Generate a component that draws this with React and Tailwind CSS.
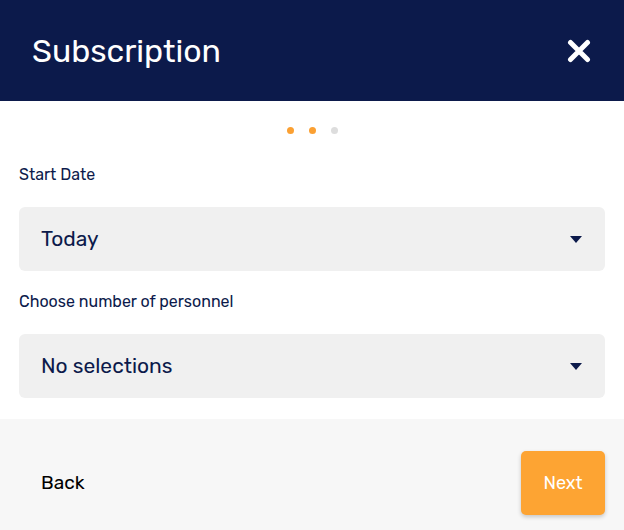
import React from "react";

const Caret = () => (
  <svg width="12" height="7" viewBox="0 0 12 7" className="shrink-0">
    <path d="M0 0 H12 L6 7 Z" fill="#0c1a4b" />
  </svg>
);

const SelectBox = ({ value }) => (
  <div className="flex items-center justify-between h-16 rounded-md bg-[#f0f0f0] pl-[22px] pr-[23px]">
    <span className="text-[21px] text-[#0c1a4b]">{value}</span>
    <Caret />
  </div>
);

export default function App() {
  return (
    <div
      className="w-[624px] h-[530px] bg-white flex flex-col"
      style={{ fontFamily: "Rubik, Roboto, 'Liberation Sans', sans-serif" }}
    >
      <header className="h-[101px] bg-[#0c1a4b] flex items-center justify-between pl-8 pr-[33px] shrink-0">
        <h1 className="text-[32px] text-white font-normal">Subscription</h1>
        <svg width="24" height="24" viewBox="0 0 24 24">
          <path
            d="M3.5 3.5 L20.5 20.5 M20.5 3.5 L3.5 20.5"
            stroke="white"
            strokeWidth="5"
            strokeLinecap="round"
          />
        </svg>
      </header>

      <div className="flex justify-center gap-[15px] pt-[26px]">
        <span className="w-[7px] h-[7px] rounded-full bg-[#fba032]" />
        <span className="w-[7px] h-[7px] rounded-full bg-[#fba032]" />
        <span className="w-[7px] h-[7px] rounded-full bg-[#dddddd]" />
      </div>

      <div className="px-[19px] pt-[30px] pb-[21px] flex flex-col">
        <label className="text-[16px] text-[#0c1a4b] leading-[22px]">Start Date</label>
        <div className="mt-[21px]">
          <SelectBox value="Today" />
        </div>
        <label className="text-[16px] text-[#0c1a4b] leading-[22px] mt-[20px]">
          Choose number of personnel
        </label>
        <div className="mt-[21px]">
          <SelectBox value="No selections" />
        </div>
      </div>

      <footer className="flex-1 bg-[#f7f7f7] flex items-start justify-between pl-[41px] pr-[19px] pt-8">
        <span className="h-16 flex items-center text-[19px] text-black">Back</span>
        <button className="w-[84px] h-16 rounded-[5px] bg-[#fda433] text-white text-[18px] shadow-[0_2px_4px_rgba(0,0,0,0.2)]">
          Next
        </button>
      </footer>
    </div>
  );
}
